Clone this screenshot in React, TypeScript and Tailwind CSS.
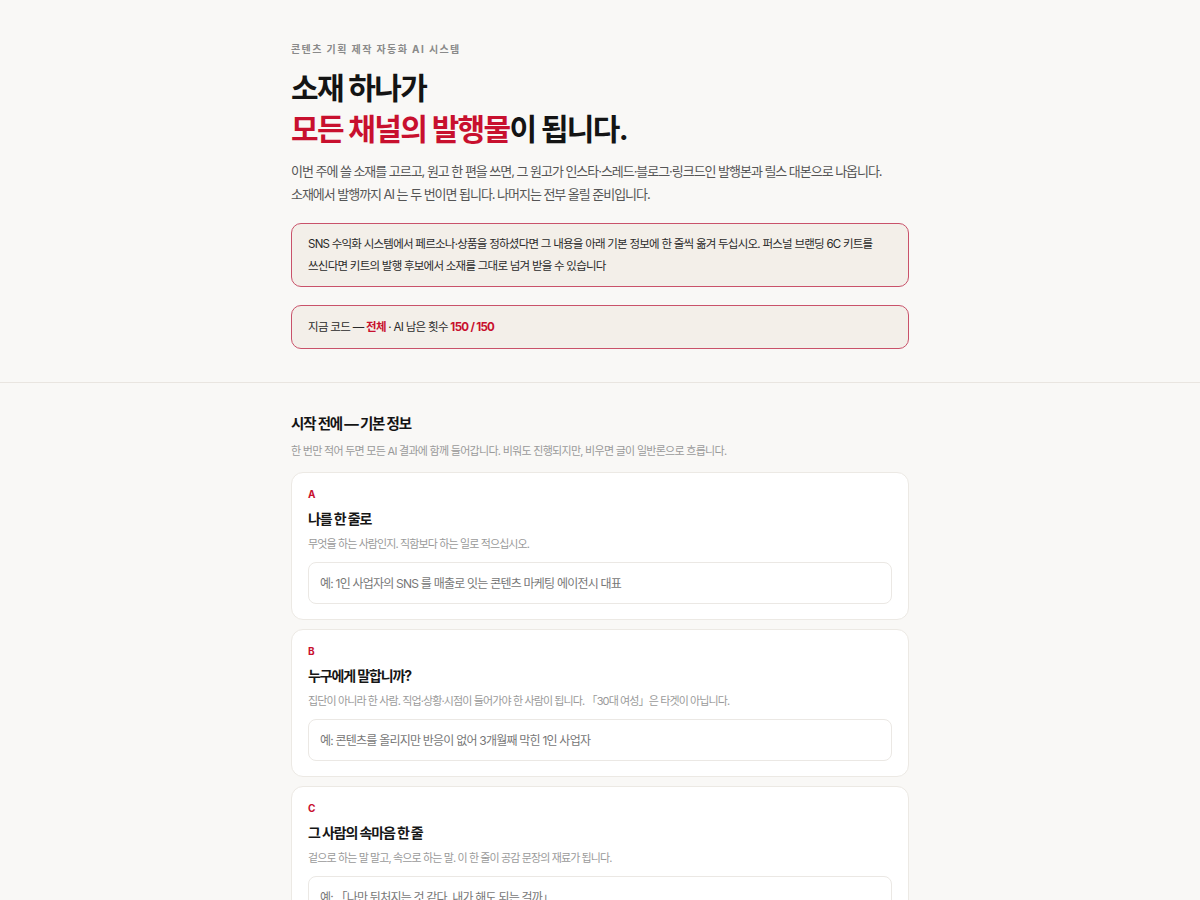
import React from 'react';

const font = { fontFamily: 'Inter, "Noto Sans CJK KR", "Noto Sans", sans-serif' };

interface FieldCardProps {
  letter: string;
  title: string;
  desc: string;
  placeholder: string;
}

const FieldCard: React.FC<FieldCardProps> = ({ letter, title, desc, placeholder }) => {
  return (
    <div className="bg-white border border-[#ece9e4] rounded-[12px] px-4 pt-4 pb-[15px]">
      <div className="text-[10px] leading-[10px] font-bold text-[#c8102e]">{letter}</div>
      <div className="mt-[9px] text-[14px] leading-[22px] font-bold text-[#161616] tracking-[-0.08em]">{title}</div>
      <div className="mt-[5px] text-[11px] leading-[18px] text-[#9a9a9a] tracking-[-0.08em]">{desc}</div>
      <input
        placeholder={placeholder}
        className="mt-[9px] block w-full h-[42px] rounded-[8px] border border-[#ebe8e4] bg-white px-[11px] text-[12px] tracking-[-0.065em] text-[#333] placeholder:text-[#777] outline-none"
        style={font}
      />
    </div>
  );
};

const App: React.FC = () => {
  return (
    <div className="min-h-screen bg-[#f9f8f6]" style={font}>
      <section className="border-b border-[#e9e5e0]">
        <div className="w-[618px] mx-auto pt-[42px] pb-[33px]">
          <div className="text-[10px] leading-[14px] font-bold tracking-[0.14em] text-[#8a8a8a]">
            콘텐츠 기획 제작 자동화 AI 시스템
          </div>
          <h1 className="mt-[12px] text-[30px] leading-[41px] font-bold tracking-[-0.055em] text-[#141414]">
            소재 하나가
            <br />
            <span className="text-[#c8102e]">모든 채널의 발행물</span>이 됩니다.
          </h1>
          <p className="mt-[10px] text-[13px] leading-[23px] text-[#555] tracking-[-0.08em] whitespace-nowrap">
            이번 주에 쓸 소재를 고르고, 원고 한 편을 쓰면, 그 원고가 인스타·스레드·블로그·링크드인 발행본과 릴스 대본으로 나옵니다.
            <br />
            소재에서 발행까지 AI 는 두 번이면 됩니다. 나머지는 전부 올릴 준비입니다.
          </p>
          <div className="mt-[17px] rounded-[10px] border border-[#c9526a] bg-[#f3efe9] px-4 py-[9px] text-[11.5px] leading-[22px] text-[#2a2a2a] tracking-[-0.065em] whitespace-nowrap">
            SNS 수익화 시스템에서 페르소나·상품을 정하셨다면 그 내용을 아래 기본 정보에 한 줄씩 옮겨 두십시오. 퍼스널 브랜딩 6C 키트를
            <br />
            쓰신다면 키트의 발행 후보에서 소재를 그대로 넘겨 받을 수 있습니다
          </div>
          <div className="mt-[18px] rounded-[10px] border border-[#c9526a] bg-[#f3efe9] px-4 py-[10px] text-[11.5px] leading-[22px] text-[#2a2a2a] tracking-[-0.06em]">
            지금 코드 — <span className="font-bold text-[#c8102e]">전체</span> · AI 남은 횟수{' '}
            <span className="font-bold text-[#c8102e]">150 / 150</span>
          </div>
        </div>
      </section>

      <section className="w-[618px] mx-auto pt-[29px] pb-10">
        <h2 className="text-[14.5px] leading-[24px] font-bold text-[#141414] tracking-[-0.08em]">시작 전에 — 기본 정보</h2>
        <p className="mt-[6px] text-[11px] leading-[18px] text-[#9a9a9a] tracking-[-0.065em]">
          한 번만 적어 두면 모든 AI 결과에 함께 들어갑니다. 비워도 진행되지만, 비우면 글이 일반론으로 흐릅니다.
        </p>
        <div className="mt-[12px] flex flex-col gap-[9px]">
          <FieldCard
            letter="A"
            title="나를 한 줄로"
            desc="무엇을 하는 사람인지. 직함보다 하는 일로 적으십시오."
            placeholder="예: 1인 사업자의 SNS 를 매출로 잇는 콘텐츠 마케팅 에이전시 대표"
          />
          <FieldCard
            letter="B"
            title="누구에게 말합니까?"
            desc="집단이 아니라 한 사람. 직업·상황·시점이 들어가야 한 사람이 됩니다. 「30대 여성」은 타겟이 아닙니다."
            placeholder="예: 콘텐츠를 올리지만 반응이 없어 3개월째 막힌 1인 사업자"
          />
          <FieldCard
            letter="C"
            title="그 사람의 속마음 한 줄"
            desc="겉으로 하는 말 말고, 속으로 하는 말. 이 한 줄이 공감 문장의 재료가 됩니다."
            placeholder="예: 「나만 뒤처지는 것 같다. 내가 해도 되는 걸까」"
          />
        </div>
      </section>
    </div>
  );
};

export default App;
